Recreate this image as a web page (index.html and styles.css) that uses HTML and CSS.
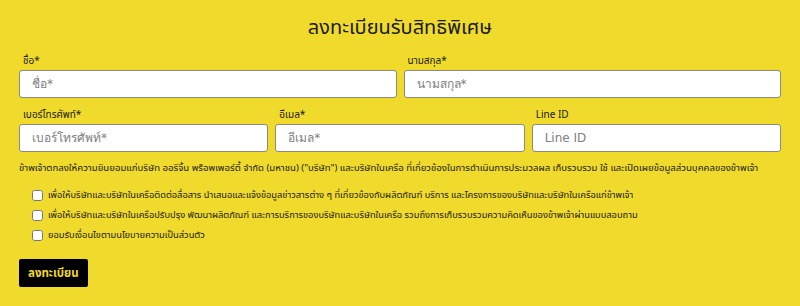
FILE: index.html
```html
<!DOCTYPE html>
<html lang="th">
<head>
    <meta charset="UTF-8">
    <meta name="viewport" content="width=device-width, initial-scale=1.0">
    <title>ลงทะเบียนรับสิทธิพิเศษ</title>
    <link rel="stylesheet" href="styles.css">
</head>
<body>

    <!-- REGISTER FORM -->
    <div class="register-container">
        <h2 class="title">ลงทะเบียนรับสิทธิพิเศษ</h2>
        <form>
            <div class="row two">
                <div class="input-group">
                    <label for="fname">ชื่อ*</label>
                    <input type="text" id="fname" placeholder="ชื่อ*">
                </div>
                <div class="input-group">
                    <label for="lname">นามสกุล*</label>
                    <input type="text" id="lname" placeholder="นามสกุล*">
                </div>
            </div>

            <div class="row three">
                <div class="input-group">
                    <label for="phone">เบอร์โทรศัพท์*</label>
                    <input type="text" id="phone" placeholder="เบอร์โทรศัพท์*">
                </div>
                <div class="input-group">
                    <label for="email">อีเมล*</label>
                    <input type="text" id="email" placeholder="อีเมล*">
                </div>
                <div class="input-group">
                    <label for="line">Line ID</label>
                    <input type="text" id="line" placeholder="Line ID">
                </div>
            </div>

            <p class="consent">ข้าพเจ้าตกลงให้ความยินยอมแก่บริษัท ออริจิ้น พร็อพเพอร์ตี้ จำกัด (มหาชน) ("บริษัท") และบริษัทในเครือ ที่เกี่ยวข้องในการดำเนินการประมวลผล เก็บรวบรวม ใช้ และเปิดเผยข้อมูลส่วนบุคคลของข้าพเจ้า</p>

            <div class="check-group">
                <label><input type="checkbox"> เพื่อให้บริษัทและบริษัทในเครือติดต่อสื่อสาร นำเสนอและแจ้งข้อมูลข่าวสารต่าง ๆ ที่เกี่ยวข้องกับผลิตภัณฑ์ บริการ และโครงการของบริษัทและบริษัทในเครือแก่ข้าพเจ้า</label>
                <label><input type="checkbox"> เพื่อให้บริษัทและบริษัทในเครือปรับปรุง พัฒนาผลิตภัณฑ์ และการบริการของบริษัทและบริษัทในเครือ รวมถึงการเก็บรวบรวมความคิดเห็นของข้าพเจ้าผ่านแบบสอบถาม</label>
                <label><input type="checkbox"> ยอมรับเงื่อนไขตามนโยบายความเป็นส่วนตัว</label>
            </div>

            <button type="submit" class="btn">ลงทะเบียน</button>
        </form>
    </div>

</body>
</html>
```

FILE: styles.css
```css
body {
    font-family: "Noto Sans", "Noto Sans Thai", sans-serif;
    background-color: #f0da2b;
    margin: 0;
    color: #1a1a1a;
}

.register-container {
    padding: 0 19px;
}

.title {
    text-align: center;
    font-size: 20px;
    font-weight: normal;
    margin: 0;
    padding-top: 11px;
    height: 42px;
    line-height: 32px;
}

.row {
    display: grid;
    gap: 7px;
    margin-bottom: 9px;
}

.row.two {
    grid-template-columns: 1fr 1fr;
}

.row.three {
    grid-template-columns: 1fr 1fr 1fr;
}

.input-group label {
    display: block;
    font-size: 10px;
    line-height: 14px;
    padding-left: 4px;
    margin-bottom: 3px;
}

input[type="text"] {
    width: 100%;
    height: 28px;
    padding: 0 0 0 12px;
    box-sizing: border-box;
    border: 1px solid #8a8a80;
    border-radius: 3px;
    background: white;
    font-family: "DejaVu Sans", "Noto Sans", sans-serif;
    font-size: 12px;
}

input::placeholder {
    color: #808080;
}

.consent {
    font-size: 9.6px;
    line-height: 14px;
    margin: 2px 0 13px 0;
    white-space: nowrap;
}

.check-group {
    padding-left: 12px;
}

.check-group label {
    display: flex;
    align-items: center;
    gap: 5px;
    font-size: 9.3px;
    line-height: 14px;
    margin-bottom: 6px;
}

.check-group input {
    width: 11px;
    height: 11px;
    margin: 0 0 0 1px;
}

.btn {
    margin-top: 11px;
    background-color: black;
    color: #f0da2b;
    border: none;
    border-radius: 2px;
    padding: 0 9px;
    height: 28px;
    font-family: inherit;
    font-size: 11.5px;
    font-weight: bold;
    cursor: pointer;
}
```
